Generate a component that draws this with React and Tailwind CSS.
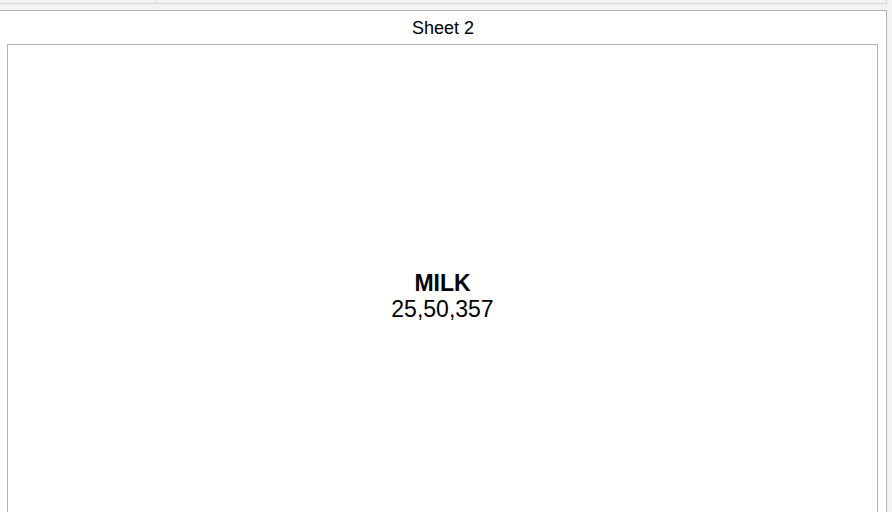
export default function App() {
    return (
        <div className="flex h-[512px] w-[892px] flex-col overflow-hidden bg-[#f3f3f3] font-['Liberation_Sans',Arial,sans-serif]">
            <div className="h-[10px] shrink-0">
                <div className="flex h-[4px] w-[887px] border-b border-[#d6d6d6]">
                    <div className="w-[156px] border-r border-[#d6d6d6]" />
                    <div className="flex-1 border-r border-[#d6d6d6]" />
                </div>
            </div>
            <div className="flex w-[887px] flex-1 flex-col border-r border-t border-[#b3b3b3] bg-white">
                <div className="flex h-[33px] shrink-0 items-center justify-center pt-[1px] text-[18px] text-black">Sheet 2</div>
                <div className="ml-[7px] mr-[8px] flex h-[503px] shrink-0 flex-col items-center justify-center border border-[#b3b3b3] text-[23px] leading-[26px] text-black">
                    <div className="font-bold">MILK</div>
                    <div>25,50,357</div>
                </div>
            </div>
        </div>
    )
}
